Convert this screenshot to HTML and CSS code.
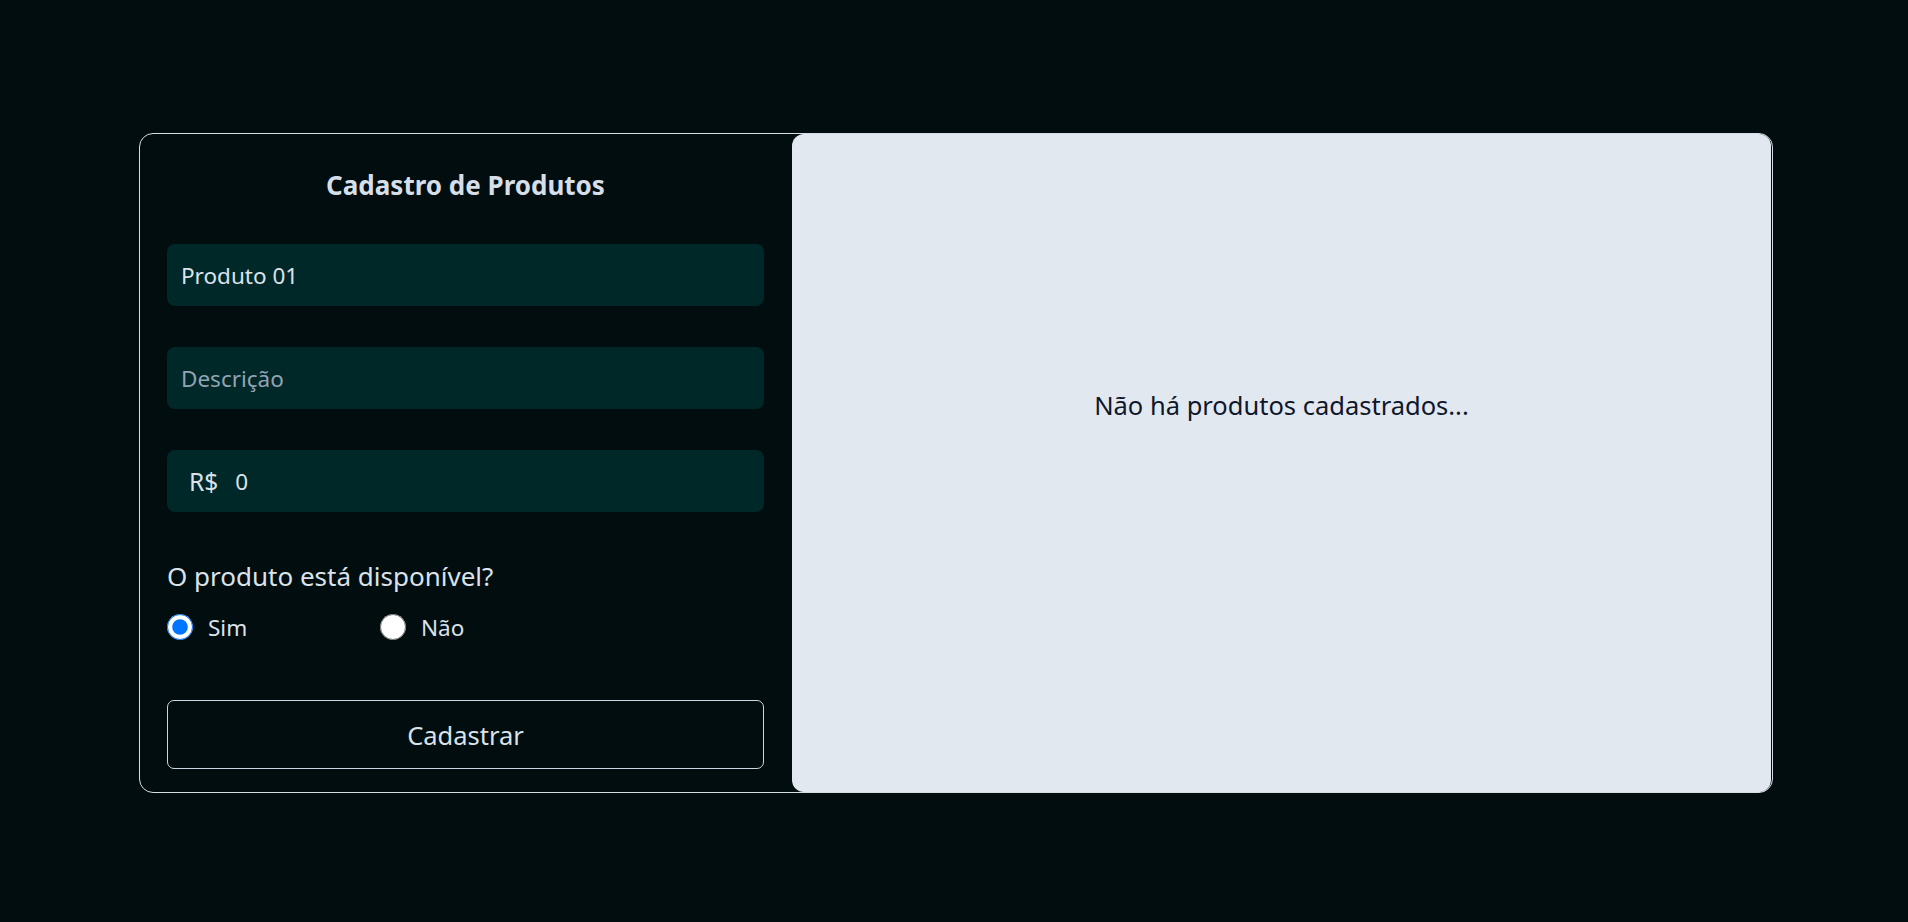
FILE: index.html
```html
<!DOCTYPE html>
<html lang="pt-BR">
<head>
<meta charset="utf-8">
<title>Cadastro de Produtos</title>
<link rel="stylesheet" href="styles.css">
</head>
<body>
<main class="card">
  <section class="form-panel">
    <h1 class="title">Cadastro de Produtos</h1>
    <input class="field" type="text" value="Produto 01">
    <input class="field" type="text" placeholder="Descrição">
    <div class="field price">
      <span class="currency">R$</span>
      <input class="price-input" type="text" value="0">
    </div>
    <p class="question">O produto está disponível?</p>
    <div class="radios">
      <label class="radio"><input type="radio" name="disp" checked><span>Sim</span></label>
      <label class="radio"><input type="radio" name="disp"><span>Não</span></label>
    </div>
    <button class="submit" type="button">Cadastrar</button>
  </section>
  <section class="list-panel">
    <p class="empty">Não há produtos cadastrados...</p>
  </section>
</main>
</body>
</html>
```

FILE: styles.css
```css
* { box-sizing: border-box; }
html, body { margin: 0; padding: 0; }
body {
  background: #010d0f;
  font-family: "Noto Sans", "Open Sans", sans-serif;
  color: #dbe2ea;
  min-height: 922px;
  padding-top: 133px;
}
.card {
  width: 1634px;
  height: 660px;
  margin: 0 0 0 139px;
  border: 1px solid #d5dde6;
  border-radius: 14px;
  display: flex;
}
.form-panel {
  width: 652px;
  flex: none;
  padding: 33px 28px 0 27px;
  display: flex;
  flex-direction: column;
}
.title {
  margin: 0 0 41px;
  font-size: 26px;
  font-weight: 700;
  line-height: 36px;
  text-align: center;
  color: #d6dee8;
}
.field {
  height: 62px;
  width: 100%;
  border: none;
  outline: none;
  border-radius: 8px;
  background: #002828;
  color: #dbe2ea;
  font-family: inherit;
  font-size: 22.5px;
  padding: 0 14px;
  margin: 0 0 41px;
}
.field::placeholder { color: #93a3b3; }
.price {
  display: flex;
  align-items: center;
  padding: 0 0 0 22px;
  margin-bottom: 48px;
}
.currency {
  font-size: 24.5px;
  color: #dbe2ea;
}
.price-input {
  flex: 1;
  background: transparent;
  border: none;
  outline: none;
  color: #dbe2ea;
  font-family: inherit;
  font-size: 22.5px;
  padding: 0 0 0 17px;
  height: 100%;
}
.question {
  margin: 0;
  font-size: 26px;
  line-height: 33px;
  color: #dbe2ea;
}
.radios {
  display: flex;
  margin-top: 19px;
  height: 30px;
  align-items: center;
}
.radio {
  display: flex;
  align-items: center;
  width: 213px;
  font-size: 22.5px;
  color: #dbe2ea;
}
.radio input {
  width: 26px;
  height: 26px;
  margin: 0 15px 0 0;
  accent-color: #0075ff;
}
.submit {
  margin-top: 58px;
  height: 69px;
  width: 100%;
  background: transparent;
  border: 1px solid #cbd5e1;
  border-radius: 7px;
  color: #dbe2ea;
  font-family: inherit;
  font-size: 25.5px;
}
.list-panel {
  flex: 1;
  margin: 0 1px 0 0;
  background: #e2e8f0;
  border-radius: 12px;
  text-align: center;
  padding-top: 255px;
}
.empty {
  margin: 0;
  font-size: 25.5px;
  line-height: 33px;
  color: #0f172a;
}
```
